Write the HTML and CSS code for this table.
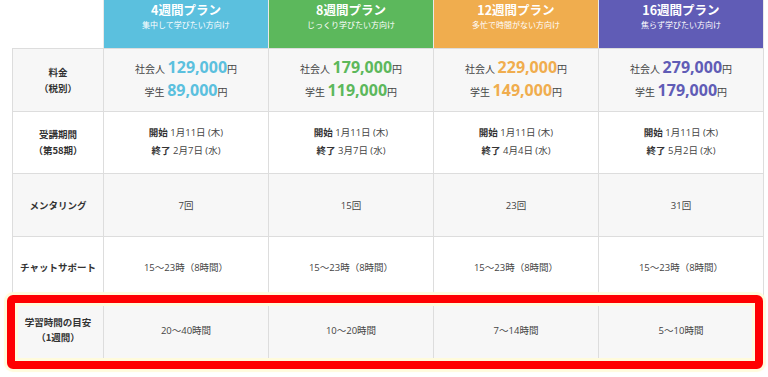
FILE: index.html
```html
<!DOCTYPE html>
<html lang="ja">
<head>
<meta charset="utf-8">
<title>プラン比較</title>
<link rel="stylesheet" href="styles.css">
</head>
<body>
<div class="wrap">
  <table class="plans">
    <colgroup>
      <col class="c-label"><col class="c-plan"><col class="c-plan"><col class="c-plan"><col class="c-plan">
    </colgroup>
    <thead>
      <tr class="head">
        <th class="blank"></th>
        <th class="plan blue"><div class="title">4週間プラン</div><div class="sub">集中して学びたい方向け</div></th>
        <th class="plan green"><div class="title">8週間プラン</div><div class="sub">じっくり学びたい方向け</div></th>
        <th class="plan orange"><div class="title">12週間プラン</div><div class="sub">多忙で時間がない方向け</div></th>
        <th class="plan purple"><div class="title">16週間プラン</div><div class="sub">焦らず学びたい方向け</div></th>
      </tr>
    </thead>
    <tbody>
      <tr class="gray price">
        <th>料金<br>（税別）</th>
        <td><div class="pl">社会人 <b class="num t-blue">129,000</b>円</div><div class="pl">学生 <b class="num t-blue">89,000</b>円</div></td>
        <td><div class="pl">社会人 <b class="num t-green">179,000</b>円</div><div class="pl">学生 <b class="num t-green">119,000</b>円</div></td>
        <td><div class="pl">社会人 <b class="num t-orange">229,000</b>円</div><div class="pl">学生 <b class="num t-orange">149,000</b>円</div></td>
        <td><div class="pl">社会人 <b class="num t-purple">279,000</b>円</div><div class="pl">学生 <b class="num t-purple">179,000</b>円</div></td>
      </tr>
      <tr class="period">
        <th>受講期間<br>（第58期）</th>
        <td><div class="dl"><b>開始</b> 1月11日 (木)</div><div class="dl"><b>終了</b> 2月7日 (水)</div></td>
        <td><div class="dl"><b>開始</b> 1月11日 (木)</div><div class="dl"><b>終了</b> 3月7日 (水)</div></td>
        <td><div class="dl"><b>開始</b> 1月11日 (木)</div><div class="dl"><b>終了</b> 4月4日 (水)</div></td>
        <td><div class="dl"><b>開始</b> 1月11日 (木)</div><div class="dl"><b>終了</b> 5月2日 (水)</div></td>
      </tr>
      <tr class="gray">
        <th>メンタリング</th>
        <td>7回</td><td>15回</td><td>23回</td><td>31回</td>
      </tr>
      <tr>
        <th>チャットサポート</th>
        <td>15〜23時（8時間）</td><td>15〜23時（8時間）</td><td>15〜23時（8時間）</td><td>15〜23時（8時間）</td>
      </tr>
      <tr class="gray last">
        <th>学習時間の目安<br>（1週間）</th>
        <td>20〜40時間</td><td>10〜20時間</td><td>7〜14時間</td><td>5〜10時間</td>
      </tr>
    </tbody>
  </table>
  <div class="highlight"></div>
</div>
</body>
</html>
```
FILE: styles.css
```css
html, body {
  margin: 0;
  padding: 0;
  background: #fff;
}
body {
  min-height: 377px;
  font-family: "Open Sans", "Noto Sans CJK JP", sans-serif;
  color: #444;
}
.wrap {
  position: relative;
  padding-left: 12px;
  padding-bottom: 16px;
  width: 751px;
}
.plans {
  width: 751px;
  table-layout: fixed;
  border-collapse: collapse;
}
.c-label { width: 91px; }
.c-plan { width: 165px; }
.plans th, .plans td {
  border: 1px solid #dddddd;
  padding: 0;
  text-align: center;
  vertical-align: middle;
  height: 61.5px;
}
.plans tbody th {
  font-family: "Noto Sans CJK JP", sans-serif;
  font-size: 9.5px;
  line-height: 16px;
  font-weight: 700;
  color: #333;
}
.plans .last th { line-height: 15px; }
.plans tbody td {
  font-family: "Open Sans", "Noto Sans CJK JP", sans-serif;
  font-size: 9.5px;
  color: #444;
}
.plans .gray th, .plans .gray td { background: #f7f7f7; }
.plans .head th { height: 48px; border-top: none; }
.plans .head .blank { border: none; border-bottom: 1px solid #dddddd; background: #fff; }
.plans .head .plan {
  color: #fff;
  vertical-align: top;
  border-left-color: #e9e9e9;
  border-right-color: #e9e9e9;
}
.plan .title {
  font-family: "Noto Sans CJK JP", sans-serif;
  font-size: 12.5px;
  font-weight: 700;
  line-height: 16px;
  padding-top: 2px;
}
.plan .sub {
  font-family: "Noto Sans CJK JP", sans-serif;
  font-size: 8px;
  font-weight: 400;
  line-height: 12px;
  margin-top: 1px;
}
.blue { background: #5bc0de; }
.green { background: #5cb85c; }
.orange { background: #f0ad4e; }
.purple { background: #605cb6; }
.t-blue { color: #5bc0de; }
.t-green { color: #5cb85c; }
.t-orange { color: #f0ad4e; }
.t-purple { color: #605cb6; }
.pl {
  font-size: 10px;
  line-height: 21px;
  color: #444;
}
.num {
  font-family: "Open Sans", sans-serif;
  font-size: 16px;
  font-weight: 700;
}
.dl {
  line-height: 18px;
}
.dl b { font-weight: 700; color: #333; }
.highlight {
  position: absolute;
  left: 7px;
  top: 295px;
  width: 756px;
  height: 74px;
  box-sizing: border-box;
  border: 8px solid #ff0000;
  border-radius: 6px;
  box-shadow: inset 0 0 0 3px #fffbdc, 0 0 1px 3px #fffbdc;
}
```
